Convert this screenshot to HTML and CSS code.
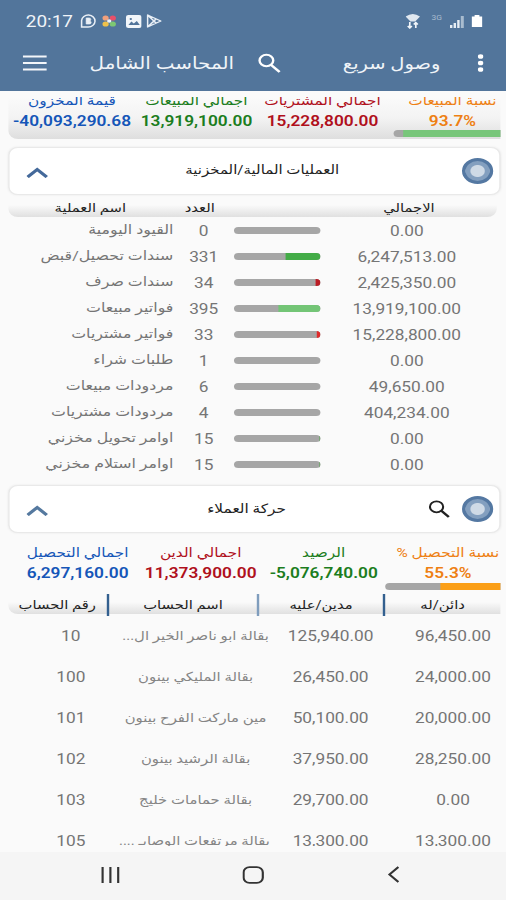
FILE: index.html
```html
<!DOCTYPE html>
<html lang="ar">
<head>
    <meta charset="UTF-8">
    <meta name="viewport" content="width=device-width, initial-scale=1.0">
    <title>المحاسب الشامل</title>
    <link rel="stylesheet" href="styles.css">
</head>
<body>
    <div class="screen">
        <div class="top">
            <div class="status">
                <span class="time">20:17</span>
                <svg class="st-msg" width="15" height="16" viewBox="0 0 15 16"><path d="M2 14V7.500A5.600 6 0 1 1 7.500 14Z" fill="none" stroke="#e9eff6" stroke-width="1.300"/><path d="M5.800 5h2.400a1.300 1.300 0 0 1 0 3H5.800zM5.800 8h2.700a1.400 1.400 0 0 1 0 3H5.800z" fill="#e9eff6" stroke="#e9eff6" stroke-width=".6"/></svg>
                <svg class="st-dots" width="12" height="12" viewBox="0 0 12 12"><circle cx="3" cy="3" r="2.600" fill="#f0a07c"/><circle cx="9" cy="3" r="2.600" fill="#e9506a"/><circle cx="3" cy="9" r="2.600" fill="#f0c24b"/><circle cx="9" cy="9" r="2.600" fill="#7dc873"/><circle cx="6" cy="6" r="1.800" fill="#eef3fa"/></svg>
                <svg class="st-img" width="13" height="13" viewBox="0 0 13 13"><rect width="13" height="13" rx="2" fill="#f2f6fa"/><path d="M2 10l2.500-3.500 2 2L9 6l2.500 4z" fill="#52759b"/><circle cx="4" cy="4" r="1" fill="#52759b"/></svg>
                <svg class="st-play" width="13" height="14" viewBox="0 0 13 14"><path d="M1 1l11 6-11 6zM1 1l7 8M1 13l7-8" fill="none" stroke="#e9eff6" stroke-width="1.300" stroke-linejoin="round"/></svg>
                <span class="fill"></span>
                <svg class="st-wifi" width="12" height="16" viewBox="0 0 12 16"><path d="M0 3.500Q6-1.500 12 3.500L8 8.500H4z" fill="#dfe7f0"/><path d="M3.500 15V9M1.800 13l1.700 2 1.700-2M8.500 9.500V15M6.800 11.500l1.700-2 1.700 2" fill="none" stroke="#f2f6fa" stroke-width="1.400"/></svg>
                <span class="net">3G</span>
                <svg class="st-sig" width="12" height="13" viewBox="0 0 12 13"><path d="M0 10h2v3H0zM3 8h2v5H3zM6 5h2v8H6z" fill="#e6edf4"/><path d="M9 1h2.500v12H9z" fill="#a9bccf"/></svg>
                <svg class="st-bat" width="9" height="12" viewBox="0 0 9 12"><path d="M2.500 0h4v1.500H9V12H0V1.500h2.500z" fill="#fff"/></svg>
            </div>
            <div class="bar">
                <svg class="menu" width="20" height="16" viewBox="0 0 20 16"><path d="M0 1.500h20M0 8h20M0 14.500h20" stroke="#f3f6fa" stroke-width="2"/></svg>
                <span class="title" dir="rtl">المحاسب الشامل</span>
                <svg class="find" width="19" height="20" viewBox="0 0 19 20"><circle cx="7" cy="7.500" r="5.700" fill="none" stroke="#fff" stroke-width="2"/><path d="M11 12l7 7" stroke="#fff" stroke-width="2.400"/></svg>
                <span class="quick" dir="rtl">وصول سريع</span>
                <svg class="dots" width="5" height="18" viewBox="0 0 5 18"><circle cx="2.500" cy="2.500" r="2.300" fill="#fff"/><circle cx="2.500" cy="9" r="2.300" fill="#fff"/><circle cx="2.500" cy="15.500" r="2.300" fill="#fff"/></svg>
            </div>
        </div>

        <div class="content">
            <div class="sum sum-sales">
                <div class="cell blue"><span class="lbl" dir="rtl">قيمة المخزون</span><b>-40,093,290.68</b></div>
                <div class="cell green"><span class="lbl" dir="rtl">اجمالي المبيعات</span><b>13,919,100.00</b></div>
                <div class="cell red"><span class="lbl" dir="rtl">اجمالي المشتريات</span><b>15,228,800.00</b></div>
                <div class="cell orange"><span class="lbl" dir="rtl">نسبة المبيعات</span><b>93.7%</b><div class="meter"><i class="m-sales"></i></div></div>
            </div>

            <div class="card">
                <svg class="chev" width="18" height="11" viewBox="0 0 18 11"><path d="M1 10l8-7.500 8 7.500" fill="none" stroke="#44699a" stroke-width="3"/></svg>
                <span class="card-title" dir="rtl">العمليات المالية/المخزنية</span>
                <span class="ring"></span>
            </div>

            <div class="ops-head">
                <span dir="rtl">اسم العملية</span><span dir="rtl">العدد</span><span></span><span dir="rtl">الاجمالي</span>
            </div>
            <div class="ops">
                <span class="name" dir="rtl">القيود اليومية</span><span>0</span><div class="track"></div><span>0.00</span>
                <span class="name" dir="rtl">سندات تحصيل/قبض</span><span>331</span><div class="track"><i class="g1" style="width: 40%"></i></div><span>6,247,513.00</span>
                <span class="name" dir="rtl">سندات صرف</span><span>34</span><div class="track"><i class="r1" style="width: 5%"></i></div><span>2,425,350.00</span>
                <span class="name" dir="rtl">فواتير مبيعات</span><span>395</span><div class="track"><i class="g2" style="width: 48%"></i></div><span>13,919,100.00</span>
                <span class="name" dir="rtl">فواتير مشتريات</span><span>33</span><div class="track"><i class="r2" style="width: 4%"></i></div><span>15,228,800.00</span>
                <span class="name" dir="rtl">طلبات شراء</span><span>1</span><div class="track"></div><span>0.00</span>
                <span class="name" dir="rtl">مردودات مبيعات</span><span>6</span><div class="track"></div><span>49,650.00</span>
                <span class="name" dir="rtl">مردودات مشتريات</span><span>4</span><div class="track"></div><span>404,234.00</span>
                <span class="name" dir="rtl">اوامر تحويل مخزني</span><span>15</span><div class="track"><i class="g3" style="width: 2%"></i></div><span>0.00</span>
                <span class="name" dir="rtl">اوامر استلام مخزني</span><span>15</span><div class="track"><i class="g3" style="width: 2%"></i></div><span>0.00</span>
            </div>

            <div class="card">
                <svg class="chev" width="18" height="11" viewBox="0 0 18 11"><path d="M1 10l8-7.500 8 7.500" fill="none" stroke="#55799f" stroke-width="3"/></svg>
                <span class="card-title card-title2" dir="rtl">حركة العملاء</span>
                <svg class="find2" width="18" height="18" viewBox="0 0 18 18"><circle cx="6.800" cy="6.800" r="5.500" fill="none" stroke="#222" stroke-width="1.700"/><path d="M10.800 10.800l6.200 6.200" stroke="#222" stroke-width="2.200"/></svg>
                <span class="ring"></span>
            </div>

            <div class="sum sum-cust">
                <div class="cell blue"><span class="lbl" dir="rtl">اجمالي التحصيل</span><b>6,297,160.00</b></div>
                <div class="cell red"><span class="lbl" dir="rtl">اجمالي الدين</span><b>11,373,900.00</b></div>
                <div class="cell green"><span class="lbl" dir="rtl">الرصيد</span><b>-5,076,740.00</b></div>
                <div class="cell orange"><span class="lbl" dir="rtl">نسبة التحصيل %</span><b>55.3%</b><div class="meter"><i class="m-cust"></i></div></div>
            </div>

            <div class="cust-head">
                <span dir="rtl">رقم الحساب</span><span dir="rtl">اسم الحساب</span><span class="pale" dir="rtl">مدين/عليه</span><span dir="rtl">دائن/له</span>
            </div>
            <div class="cust">
                <span>10</span><span class="name" dir="rtl">بقالة ابو ناصر الخير ال...</span><span>125,940.00</span><span>96,450.00</span>
                <span>100</span><span class="name" dir="rtl">بقالة المليكي بينون</span><span>26,450.00</span><span>24,000.00</span>
                <span>101</span><span class="name" dir="rtl">مين ماركت الفرح بينون</span><span>50,100.00</span><span>20,000.00</span>
                <span>102</span><span class="name" dir="rtl">بقالة الرشيد بينون</span><span>37,950.00</span><span>28,250.00</span>
                <span>103</span><span class="name" dir="rtl">بقالة حمامات خليج</span><span>29,700.00</span><span>0.00</span>
                <span>105</span><span class="name" dir="rtl">بقالة مرتفعات الوصابـ ....</span><span>13,300.00</span><span>13,300.00</span>
            </div>
        </div>

        <div class="nav">
            <svg width="16" height="16" viewBox="0 0 16 16"><path d="M1.500 0v16M8 0v16M14.500 0v16" stroke="#333" stroke-width="1.800"/></svg>
            <svg width="18" height="18" viewBox="0 0 18 18"><rect x="1" y="1.200" width="16" height="15.600" rx="5" fill="none" stroke="#333" stroke-width="1.800"/></svg>
            <svg width="10" height="17" viewBox="0 0 10 17"><path d="M9 1L1.500 8.500 9 16" fill="none" stroke="#333" stroke-width="1.800"/></svg>
        </div>
    </div>
</body>
</html>
```
FILE: styles.css
```css
*{
    margin: 0;
    padding: 0;
    box-sizing: border-box;
}
html,body{
    width: 506px;
    height: 900px;
    overflow: hidden;
}
/* the phone screen is drawn wider than its own pixels */
.screen{
    width: 421.67px;
    height: 900px;
    transform: scaleX(1.2);
    transform-origin: 0 0;
    display: flex;
    flex-direction: column;
    background-color: #fafafa;
    font-family: Roboto, "DejaVu Sans", sans-serif;
    font-size: 14.4px;
    color: #757575;
    overflow: hidden;
}
.screen svg{
    display: block;
    flex: none;
}
.top{
    height: 91px;
    flex: none;
    background-color: #52759b;
    color: #f0f4f8;
}
.status{
    height: 42px;
    display: flex;
    align-items: center;
    padding: 0 20px 0 21.5px;
}
.time{
    font-size: 15.8px;
    width: 44px;
}
.st-dots{
    margin-left: 4.5px;
}
.st-img{
    margin-left: 7.5px;
}
.st-play{
    margin-left: 4.5px;
}
.st-wifi{
    margin-right: 2px;
}
.fill{
    flex: 1;
}
.net{
    font-size: 7px;
    width: 12px;
    margin: -6px 3px 0 8px;
    color: #a9bccf;
}
.st-bat{
    margin-left: 6px;
}
.bar{
    height: 42px;
    display: flex;
    align-items: center;
    padding: 0 19px;
}
.title{
    width: 122px;
    margin-left: 34px;
    font-size: 16.6px;
    white-space: nowrap;
}
.find{
    margin-left: 20px;
}
.quick{
    width: 83px;
    margin-left: 50px;
    font-size: 16.2px;
    white-space: nowrap;
}
.dots{
    margin-left: auto;
}
.content{
    height: 749px;
    margin-top: 6px;
    overflow: hidden;
    flex: none;
}
.sum{
    display: grid;
    text-align: center;
    white-space: nowrap;
}
.sum-sales{
    height: 42px;
    margin-left: 6.5px;
    margin-right: 5px;
    grid-template-columns: 107px 100.5px 109.5px 107px;
    border-radius: 0 0 0 8px;
    background: linear-gradient(#fafafa, #f3f3f3 50%, #dedede);
    overflow: hidden;
}
.sum-sales .lbl{
    margin-top: -6px;
}
.sum-sales .cell b{
    height: 19px;
}
.sum-cust{
    height: 60px;
    padding-top: 10px;
    margin-left: 13.5px;
    margin-right: 5px;
    grid-template-columns: 102.5px 102.5px 102.5px 104.5px;
    overflow: hidden;
}
.cell{
    display: flex;
    flex-direction: column;
    align-items: stretch;
    font-size: 14.4px;
}
.cell .lbl{
    height: 20px;
    line-height: 20px;
    font-size: 12.8px;
}
.cell b{
    height: 20px;
    line-height: 22px;
    font-weight: 600;
}
.blue{ color: #1556b8; }
.green{ color: #1b7d20; }
.red{ color: #b0101c; }
.orange{ color: #ee8013; }
.meter{
    height: 7px;
    border-radius: 4px 0 0 4px;
    background-color: #a6a6a6;
    overflow: hidden;
}
.sum-sales .meter{
    margin: 0 0 0 4px;
}
.meter i{
    display: block;
    height: 7px;
}
.m-sales{
    margin-left: 8px;
    background-color: #78c67a;
}
.m-cust{
    margin-left: 46px;
    background-color: #fb9f17;
}
.card{
    height: 48px;
    margin: 8px 5px 0 6.500px;
    padding: 0 5px 0 14px;
    display: flex;
    align-items: center;
    background-color: #fff;
    border: 1px solid #e9e9e9;
    border-radius: 8px;
    box-shadow: 0 0 2px #e8e8e8;
    color: #222;
}
.card-title{
    width: 154px;
    margin-left: 102px;
    margin-right: auto;
    text-align: center;
    font-size: 12.5px;
    line-height: 20px;
    margin-top: -2px;
    white-space: nowrap;
}
.card-title2{
    width: 70px;
    margin-left: 131px;
    margin-top: 0;
    font-size: 12.8px;
}
.chev{
    margin-top: 3px;
}
.find2{
    margin-right: 10px;
}
.ring{
    width: 26px;
    height: 26px;
    border-radius: 50%;
    border: 3px solid #5478a2;
    background: radial-gradient(circle, #cfdae6 0 5.5px, #839fbf 6.5px);
}
.ops-head{
    height: 20px;
    margin: 2px 8px 0 6.5px;
    display: grid;
    grid-template-columns: 137.5px 45px 79px 1fr;
    text-align: center;
    line-height: 22px;
    font-size: 12.3px;
    color: #222;
    background: linear-gradient(#fafafa 40%, #e0e0e0);
    border-radius: 0 0 8px 8px;
}
.ops{
    display: grid;
    grid-template-columns: 144.5px 50.5px 72px 144px;
    grid-auto-rows: 26px;
    text-align: center;
    align-items: center;
    white-space: nowrap;
}
.ops > span{
    height: 26px;
    line-height: 29px;
}
.ops > .name{
    font-size: 13.2px;
    text-align: right;
    line-height: 26px;
}
.track{
    height: 7px;
    border-radius: 4px;
    background-color: #a6a6a6;
    overflow: hidden;
}
.track i{
    display: block;
    height: 7px;
    margin-left: auto;
}
.g1{ background-color: #43ac47; }
.g2{ background-color: #73c576; }
.g3{ background-color: #6fa56a; }
.r1{ background-color: #bb1c24; }
.r2{ background-color: #e02a2a; }
.cust-head{
    height: 20px;
    margin: 1px 5px 0 6.5px;
    display: grid;
    grid-template-columns: 82.5px 125px 105px 1fr;
    text-align: center;
    line-height: 22px;
    font-size: 12.3px;
    color: #222;
    background: linear-gradient(#fafafa 40%, #e0e0e0);
    border-radius: 0 0 0 8px;
}
.cust-head span + span{
    border-left: 2px solid #33608f;
}
.cust-head span.pale{
    border-left-color: #7f9dbd;
}
.cust{
    display: grid;
    grid-template-columns: 101px 124px 101px 103px;
    grid-auto-rows: 41px;
    margin-top: 1px;
    line-height: 44px;
    text-align: center;
    white-space: nowrap;
}
.cust > span{
    height: 41px;
}
.cust > span:nth-child(4n+1){
    padding-left: 17px;
}
.cust .name{
    font-size: 12.4px;
    line-height: 42px;
    color: #858585;
}
.nav{
    flex: 1;
    margin-top: 6px;
    background-color: #f5f5f5;
    display: flex;
    align-items: center;
    justify-content: space-between;
    padding: 0 89px 3px 84px;
}
```
